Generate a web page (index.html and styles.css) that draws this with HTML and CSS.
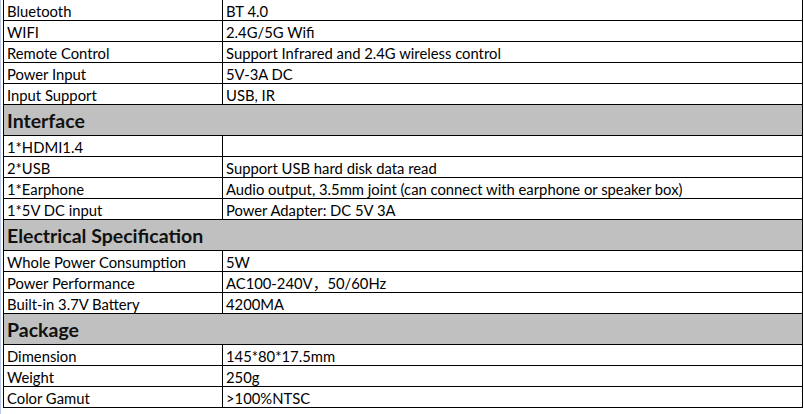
FILE: index.html
```html
<!DOCTYPE html>
<html>
<head>
<meta charset="utf-8">
<link rel="stylesheet" href="styles.css">
</head>
<body>
<table class="spec">
  <colgroup><col class="c-name"><col class="c-val"></colgroup>
  <tbody>
    <tr><td>Bluetooth</td><td>BT 4.0</td></tr>
    <tr><td>WIFI</td><td>2.4G/5G Wifi</td></tr>
    <tr><td>Remote Control</td><td>Support Infrared and 2.4G wireless control</td></tr>
    <tr><td>Power Input</td><td>5V-3A DC</td></tr>
    <tr><td>Input Support</td><td>USB, IR</td></tr>
    <tr class="section"><td colspan="2">Interface</td></tr>
    <tr><td>1*HDMI1.4</td><td></td></tr>
    <tr><td>2*USB</td><td>Support USB hard disk data read</td></tr>
    <tr><td>1*Earphone</td><td>Audio output, 3.5mm joint (can connect with earphone or speaker box)</td></tr>
    <tr><td>1*5V DC input</td><td>Power Adapter: DC 5V 3A</td></tr>
    <tr class="section"><td colspan="2">Electrical Specification</td></tr>
    <tr><td>Whole Power Consumption</td><td>5W</td></tr>
    <tr><td>Power Performance</td><td>AC100-240V，50/60Hz</td></tr>
    <tr><td>Built-in 3.7V Battery</td><td>4200MA</td></tr>
    <tr class="section"><td colspan="2">Package</td></tr>
    <tr><td>Dimension</td><td>145*80*17.5mm</td></tr>
    <tr><td>Weight</td><td>250g</td></tr>
    <tr><td>Color Gamut</td><td>&gt;100%NTSC</td></tr>
  </tbody>
</table>
</body>
</html>
```

FILE: styles.css
```css
html, body {
  margin: 0;
  padding: 0;
  background: #ffffff;
}
body {
  padding-left: 1px;
  border-left: 1px solid #b8c8e4;
  min-height: 414px;
  box-sizing: border-box;
}
.spec {
  margin-top: -1px;
  margin-left: 1px;
  border-collapse: collapse;
  table-layout: fixed;
  width: 799px;
  font-family: Lato, "Noto Sans CJK SC", sans-serif;
  font-size: 14.8px;
  color: #000;
}
.c-name { width: 219px; }
.c-val { width: 580px; }
.spec td {
  border: 1px solid #000;
  height: 20px;
  padding: 2px 3px 0;
  line-height: 18px;
  white-space: nowrap;
  overflow: hidden;
  box-sizing: border-box;
  vertical-align: top;
}
.spec tr.section td {
  background: #c0c0c0;
  height: 31px;
  padding-top: 3px;
  font-weight: bold;
  font-size: 19.5px;
  line-height: 26px;
  color: #111;
}
```
